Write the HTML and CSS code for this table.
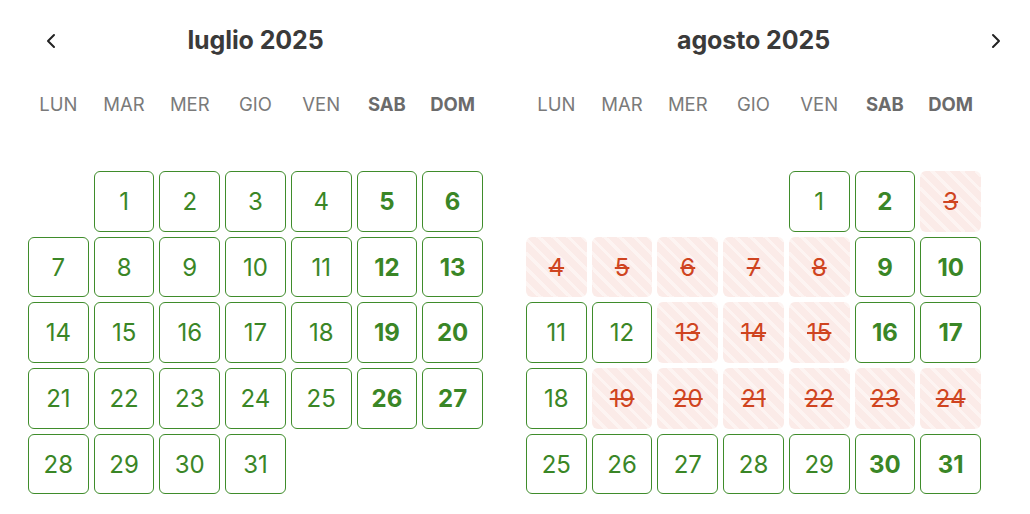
FILE: index.html
```html
<!DOCTYPE html>
<html lang="it">
<head>
<meta charset="utf-8">
<title>Calendario</title>
<link rel="stylesheet" href="styles.css">
</head>
<body>
<div class="picker">
  <button class="nav prev" aria-label="Mese precedente">
    <svg width="10" height="16" viewBox="0 0 10 16"><path d="M8 2 L2 8 L8 14" fill="none" stroke="#222" stroke-width="2" stroke-linecap="round" stroke-linejoin="round"/></svg>
  </button>
  <button class="nav next" aria-label="Mese successivo">
    <svg width="10" height="16" viewBox="0 0 10 16"><path d="M2 2 L8 8 L2 14" fill="none" stroke="#222" stroke-width="2" stroke-linecap="round" stroke-linejoin="round"/></svg>
  </button>
  <div class="months">
    <section class="month">
      <h2 class="title">luglio 2025</h2>
      <div class="dow">
        <span>LUN</span><span>MAR</span><span>MER</span><span>GIO</span><span>VEN</span><span class="we">SAB</span><span class="we">DOM</span>
      </div>
      <div class="days">
        <span class="empty"></span>
        <span class="day">1</span><span class="day">2</span><span class="day">3</span><span class="day">4</span><span class="day we">5</span><span class="day we">6</span>
        <span class="day">7</span><span class="day">8</span><span class="day">9</span><span class="day">10</span><span class="day">11</span><span class="day we">12</span><span class="day we">13</span>
        <span class="day">14</span><span class="day">15</span><span class="day">16</span><span class="day">17</span><span class="day">18</span><span class="day we">19</span><span class="day we">20</span>
        <span class="day">21</span><span class="day">22</span><span class="day">23</span><span class="day">24</span><span class="day">25</span><span class="day we">26</span><span class="day we">27</span>
        <span class="day">28</span><span class="day">29</span><span class="day">30</span><span class="day">31</span>
      </div>
    </section>
    <section class="month">
      <h2 class="title">agosto 2025</h2>
      <div class="dow">
        <span>LUN</span><span>MAR</span><span>MER</span><span>GIO</span><span>VEN</span><span class="we">SAB</span><span class="we">DOM</span>
      </div>
      <div class="days">
        <span class="empty"></span><span class="empty"></span><span class="empty"></span><span class="empty"></span>
        <span class="day">1</span><span class="day we">2</span><span class="day off">3</span>
        <span class="day off">4</span><span class="day off">5</span><span class="day off">6</span><span class="day off">7</span><span class="day off">8</span><span class="day we">9</span><span class="day we">10</span>
        <span class="day">11</span><span class="day">12</span><span class="day off">13</span><span class="day off">14</span><span class="day off">15</span><span class="day we">16</span><span class="day we">17</span>
        <span class="day">18</span><span class="day off">19</span><span class="day off">20</span><span class="day off">21</span><span class="day off">22</span><span class="day off">23</span><span class="day off">24</span>
        <span class="day">25</span><span class="day">26</span><span class="day">27</span><span class="day">28</span><span class="day">29</span><span class="day we">30</span><span class="day we">31</span>
      </div>
    </section>
  </div>
</div>
</body>
</html>
```
FILE: styles.css
```css
* { box-sizing: border-box; }
html, body { margin: 0; padding: 0; background: #fff; }
body { font-family: Inter, "Noto Sans", sans-serif; width: 1030px; height: 514px; overflow: hidden; }

.picker { position: relative; width: 1030px; }

.nav {
  position: absolute;
  top: 32px;
  width: 20px;
  height: 18px;
  padding: 0;
  border: 0;
  background: none;
  display: flex;
  align-items: center;
  justify-content: center;
}
.nav.prev { left: 41px; }
.nav.next { left: 986px; }

.months {
  display: flex;
  gap: 43px;
  padding: 25px 0 0 28px;
}
.month { width: 455px; }

.title {
  margin: 0;
  height: 30px;
  line-height: 30px;
  text-align: center;
  font-size: 25px;
  font-weight: 700;
  color: #3a3a3a;
  letter-spacing: -0.1px;
}

.dow {
  display: grid;
  grid-template-columns: repeat(7, 1fr);
  column-gap: 5px;
  margin-top: 40px;
  height: 18px;
  line-height: 18px;
  text-align: center;
  font-size: 18.5px;
  color: #7a7a7a;
}
.dow .we { font-weight: 700; color: #6b6b6b; }

.days {
  display: grid;
  grid-template-columns: repeat(7, 1fr);
  grid-auto-rows: 60.7px;
  gap: 5px;
  margin-top: 58px;
}
.day {
  display: flex;
  align-items: center;
  justify-content: center;
  border: 1px solid #3f8c2b;
  border-radius: 6px;
  color: #3a8626;
  font-size: 24px;
}
.day.we { font-weight: 700; }
.day.off {
  border-color: transparent;
  color: #cf4420;
  text-decoration: line-through;
  text-decoration-thickness: 2px;
  background: repeating-linear-gradient(45deg, #fbebe8 0 7px, #fdf4f2 7px 10.4px);
}
```
